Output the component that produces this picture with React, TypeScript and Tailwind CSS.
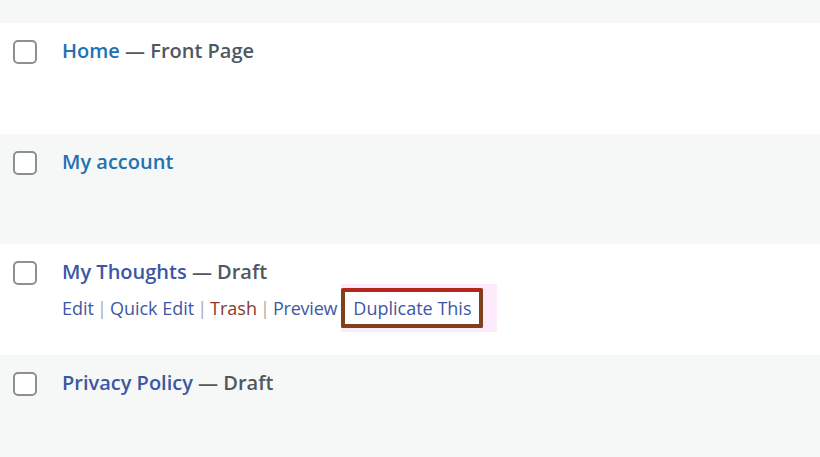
const font = { fontFamily: '"Segoe UI", "Open Sans", "Noto Sans", sans-serif' };

type Row = {
  title: string;
  state?: string;
  striped: boolean;
  height: string;
  actions?: boolean;
};

const rows: Row[] = [
  { title: "Home", state: "Front Page", striped: false, height: "h-[111px]" },
  { title: "My account", striped: true, height: "h-[110px]" },
  { title: "My Thoughts", state: "Draft", striped: false, height: "h-[111px]", actions: true },
  { title: "Privacy Policy", state: "Draft", striped: true, height: "h-[102px]" },
];

function Sep() {
  return <span className="mx-[3px] text-[#a7aaad]">|</span>;
}

function RowActions() {
  return (
    <div className="mt-[-2px] flex items-center text-[18px] leading-[24px] text-[#3d58a4]">
      <a>Edit</a>
      <Sep />
      <a>Quick Edit</a>
      <Sep />
      <a className="text-[#8a3a2c]">Trash</a>
      <Sep />
      <a className="tracking-[-0.2px]">Preview</a>
      <span className="ml-[4px] rounded-[2px] bg-[#fdeafb] py-[4px] pr-[14px]">
        <span className="block rounded-[2px] border-[4px] border-[#80401c] border-t-[#b3261c] bg-white px-[8px] py-[4px]">
          Duplicate This
        </span>
      </span>
    </div>
  );
}

export default function App() {
  return (
    <div className="min-h-screen w-full bg-[#f6f7f7]" style={font}>
      <div className="h-[23px] bg-[#f6f7f7]" />
      {rows.map((r) => (
        <div
          key={r.title}
          className={`flex ${r.height} ${r.striped ? "bg-[#f6f7f7]" : "bg-white"}`}
        >
          <div className="pl-[13px] pt-[17px]">
            <div className="h-[24px] w-[24px] rounded-[5px] border-2 border-[#8c8f94] bg-white" />
          </div>
          <div className="pl-[25px] pt-[14px]">
            <div className="text-[20px] font-semibold leading-[28px] text-[#50575e]">
              <a className={r.title === "Home" || r.title === "My account" ? "text-[#2271b1]" : "text-[#3b57a3]"}>
                {r.title}
              </a>
              {r.state && <span> — {r.state}</span>}
            </div>
            {r.actions && <RowActions />}
          </div>
        </div>
      ))}
    </div>
  );
}
